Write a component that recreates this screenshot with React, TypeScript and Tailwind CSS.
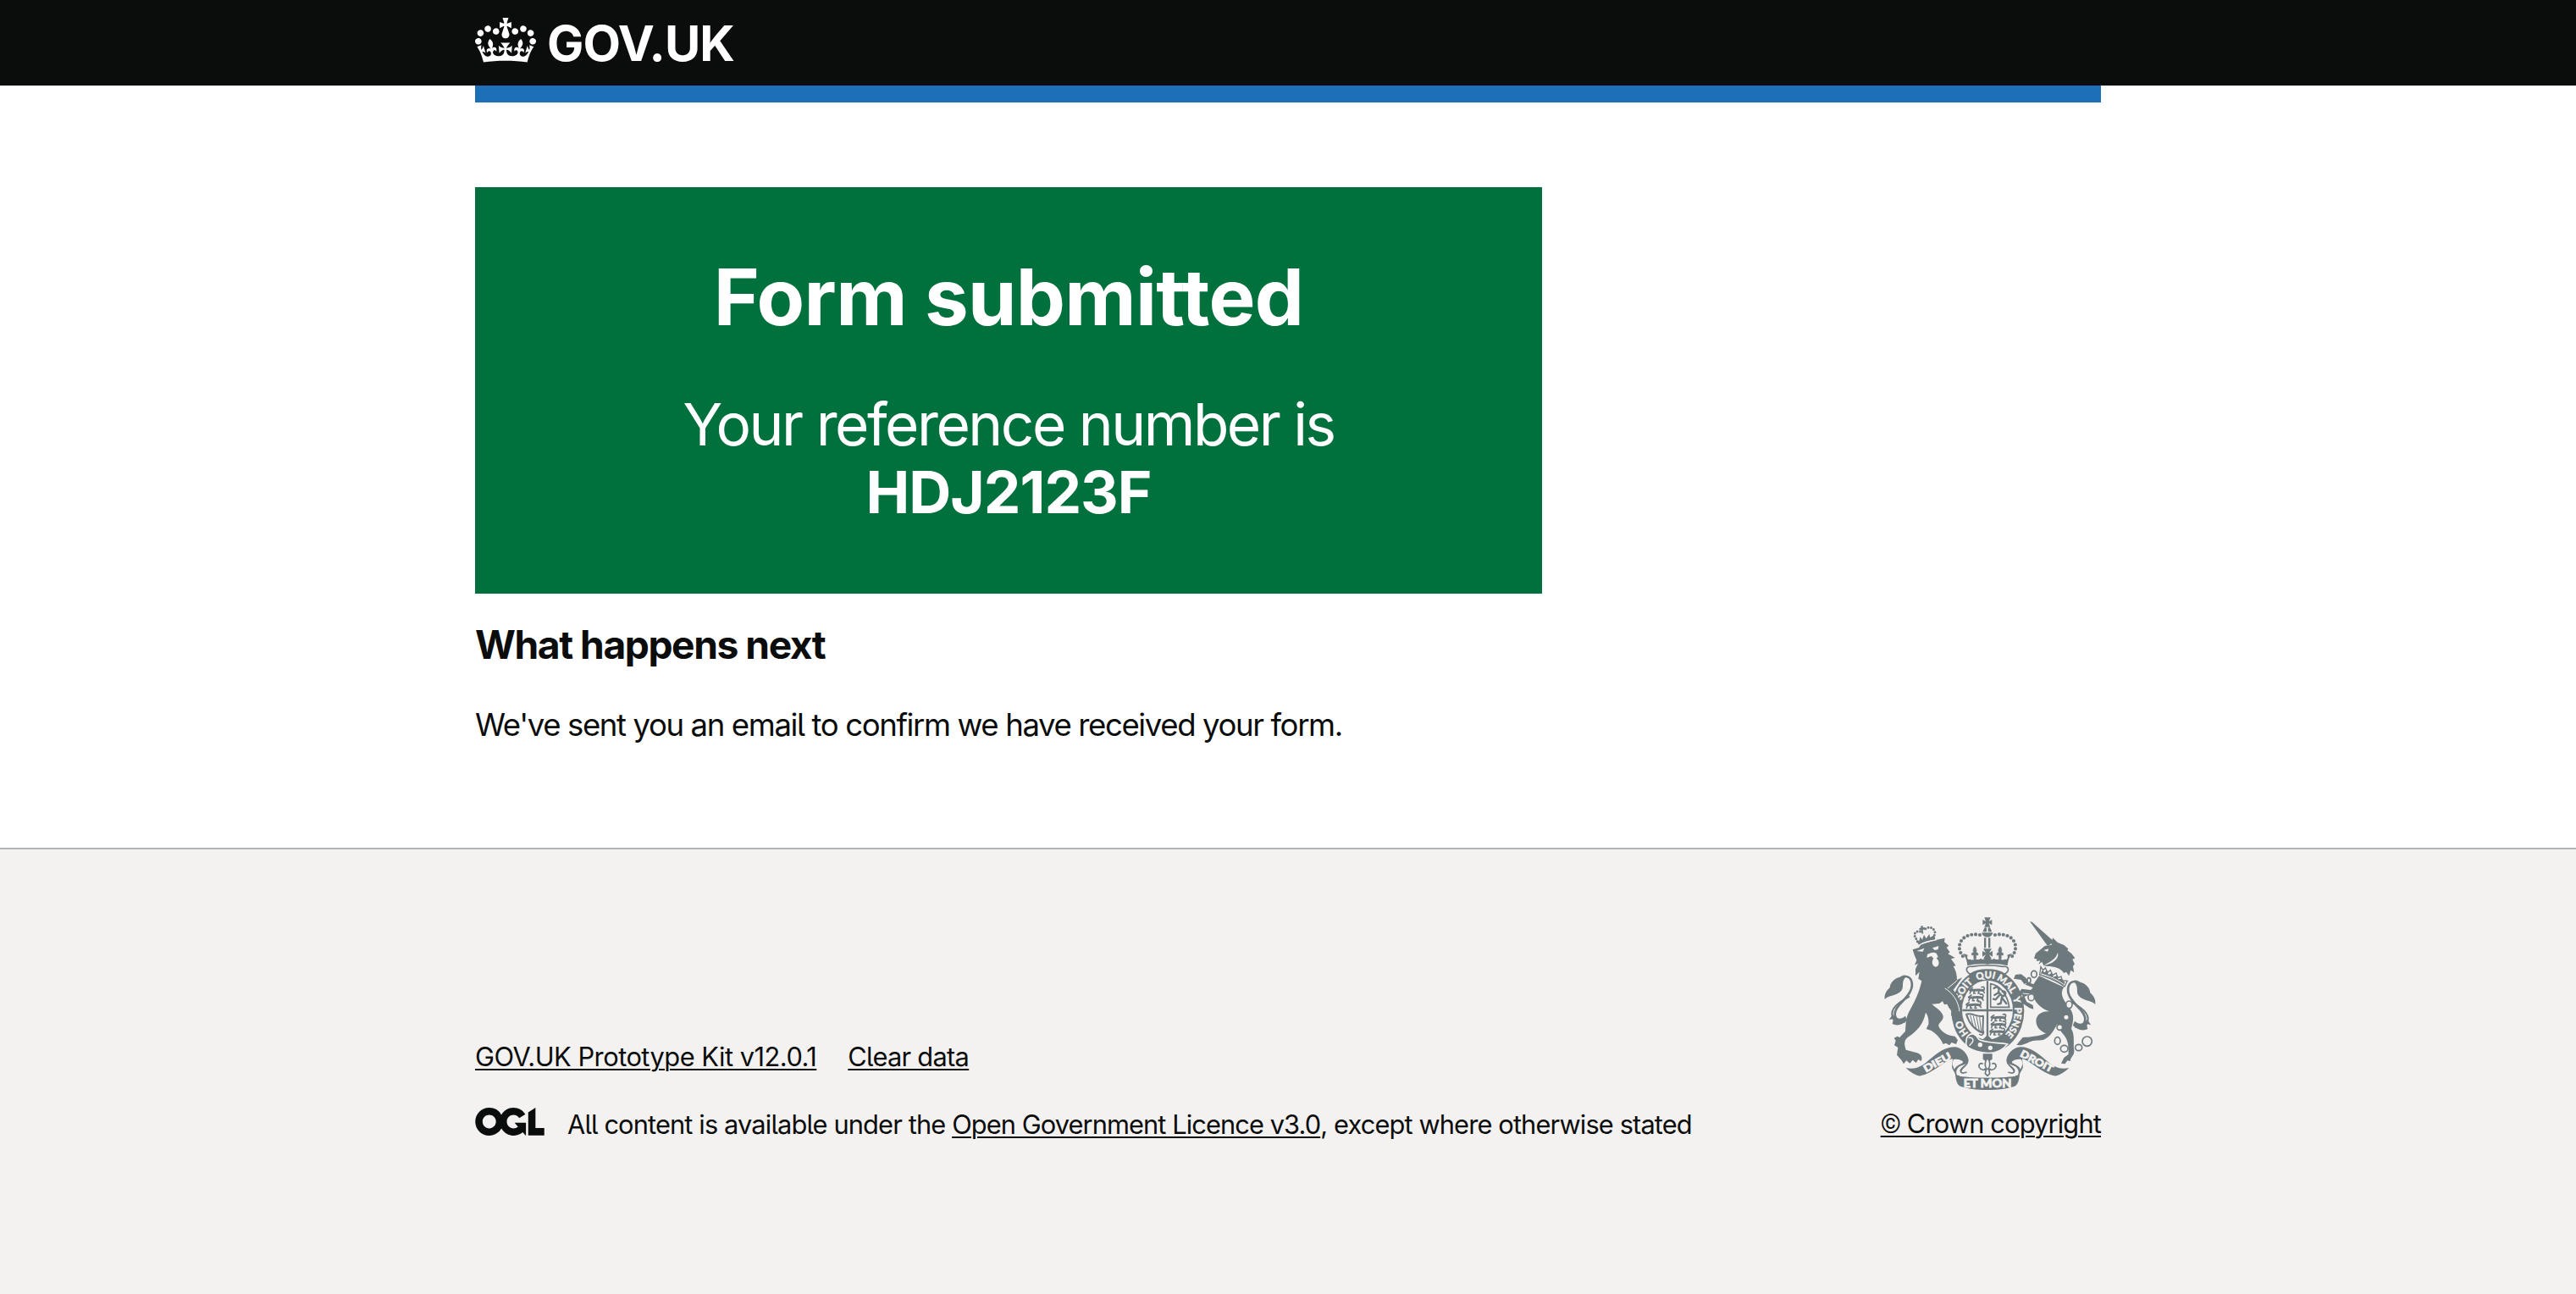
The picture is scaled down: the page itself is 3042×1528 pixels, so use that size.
const INK = '#6e797d';
const PAPER = '#f3f2f1';

function CrownLogo() {
  return (
    <svg viewBox="0 0 132 97" className="h-[53px] w-[72px] shrink-0" fill="currentColor" aria-hidden="true">
      <path
        fillRule="evenodd"
        d="M25 30.2c3.5 1.5 7.7-.2 9.1-3.7 1.5-3.6-.2-7.8-3.9-9.2-3.6-1.4-7.6.3-9.1 3.9-1.4 3.5.3 7.5 3.9 9zM9 39.5c3.6 1.5 7.8-.2 9.2-3.7 1.5-3.6-.2-7.8-3.9-9.1-3.6-1.5-7.6.2-9.1 3.8-1.4 3.5.3 7.5 3.8 9zM4.4 57.2c3.5 1.5 7.7-.2 9.1-3.8 1.5-3.6-.2-7.7-3.9-9.1-3.5-1.5-7.6.3-9.1 3.8-1.4 3.5.3 7.6 3.9 9.1zm38.3-21.4c3.5 1.5 7.7-.2 9.1-3.8 1.5-3.6-.2-7.7-3.9-9.1-3.6-1.5-7.6.3-9.1 3.8-1.3 3.6.4 7.7 3.9 9.1zm64.4-5.6c-3.6 1.5-7.8-.2-9.1-3.7-1.5-3.6.2-7.8 3.8-9.2 3.6-1.4 7.7.3 9.2 3.9 1.3 3.5-.4 7.5-3.9 9zm15.9 9.3c-3.6 1.5-7.7-.2-9.1-3.7-1.5-3.6.2-7.8 3.7-9.1 3.6-1.5 7.7.2 9.2 3.8 1.5 3.5-.3 7.5-3.8 9zm4.7 17.7c-3.6 1.5-7.8-.2-9.2-3.8-1.5-3.6.2-7.7 3.9-9.1 3.6-1.5 7.7.3 9.2 3.8 1.3 3.5-.4 7.6-3.9 9.1zM89.3 35.8c-3.6 1.5-7.8-.2-9.2-3.8-1.4-3.6.2-7.7 3.9-9.1 3.6-1.5 7.7.3 9.2 3.8 1.4 3.6-.3 7.7-3.9 9.1zM69.7 17.7l8.9 4.7V9.3l-8.9 2.8c-.2-.3-.5-.6-.9-.9L72.4 0H59.6l3.5 11.2c-.3.3-.6.5-.9.9l-8.8-2.8v13.1l8.8-4.7c.3.3.6.7.9.9l-5 15.4v.1c-.2.8-.4 1.6-.4 2.4 0 4.1 3.1 7.5 7 8.1h.2c.3 0 .7.1 1 .1.4 0 .7 0 1-.1h.2c4-.6 7.1-4.1 7.1-8.1 0-.8-.1-1.7-.4-2.4V34l-5.1-15.4c.4-.2.7-.6 1-.9zM66 92.8c16.9 0 32.8 1.1 47.1 3.2 4-16.9 8.9-26.7 14-33.5l-9.6-3.4c1 4.9 1.1 7.2 0 10.2-1.5-1.4-3-4.3-4.2-8.7L108.6 76c2.8-2 5-3.2 7.5-3.3-4.4 9.4-10 11.9-13.6 11.2-4.3-.8-6.3-4.6-5.6-7.9 1-4.7 5.7-5.9 8-.5 4.3-8.7-3-11.4-7.6-8.8 7.1-7.2 7.9-13.5 2.1-21.1-8 6.1-8.1 12.3-4.5 20.8-4.7-5.4-12.1-2.5-9.5 6.2 3.4-5.2 7.9-2 7.2 3.1-.6 4.3-6.4 7.8-13.5 7.2-10.3-.9-10.9-8-11.2-13.8 2.5-.5 7.1 1.8 11 7.3L80.2 60c-4.1 4.4-8 5.3-12.3 5.4 1.4-4.4 8-11.6 8-11.6H55.5s6.4 7.2 7.9 11.6c-4.2-.1-8-1-12.3-5.4l1.4 16.4c3.9-5.5 8.5-7.7 10.9-7.3-.3 5.8-.9 12.8-11.1 13.8-7.2.6-12.9-2.9-13.5-7.2-.7-5 3.8-8.3 7.1-3.1 2.7-8.7-4.6-11.6-9.4-6.2 3.7-8.5 3.6-14.7-4.6-20.8-5.8 7.6-5 13.9 2.2 21.1-4.7-2.6-11.9.1-7.7 8.8 2.3-5.5 7.1-4.2 8.1.5.7 3.3-1.3 7.1-5.7 7.9-3.5.7-9-1.8-13.5-11.2 2.5.1 4.7 1.3 7.5 3.3l-4.7-15.4c-1.2 4.4-2.7 7.2-4.3 8.7-1.1-3-.9-5.3 0-10.2l-9.5 3.4c5 6.9 9.9 16.7 14 33.5 14.8-2.1 30.8-3.2 47.7-3.2z"
      />
    </svg>
  );
}

function LicenceLogo() {
  return (
    <svg viewBox="0 0 483.2 195.7" className="h-[33px] w-[82px] shrink-0" fill="currentColor" aria-hidden="true">
      <path d="M421.5 142.8V.1l-50.7 32.3v161.1h112.4v-50.7zm-122.3-9.6A47.12 47.12 0 0 1 221 97.8c0-26 21.1-47.1 47.1-47.1 16.7 0 31.4 8.7 39.7 21.8l42.7-27.2A97.63 97.63 0 0 0 268.1 0c-36.5 0-68.3 20.1-85.1 49.7A98 98 0 0 0 97.8 0C43.9 0 0 43.9 0 97.8s43.9 97.8 97.8 97.8c36.5 0 68.3-20.1 85.1-49.7a97.76 97.76 0 0 0 149.6 25.4l19.4 22.2h3v-87.8h-80l24.3 27.5zM97.8 145c-26 0-47.1-21.1-47.1-47.1s21.1-47.1 47.1-47.1 47.1 21.1 47.1 47.1S123.8 145 97.8 145" />
    </svg>
  );
}

/* One arch of pearls, a fleur-de-lis and the rising rim of the central crown. */
function CrownSide() {
  return (
    <g>
      <path d="M414 101C380 94 347 108 342 138C340 155 346 168 358 182" fill="none" stroke={INK} strokeWidth="12.5" strokeLinecap="round" strokeDasharray="0 14.6" />
      <path d="M396 142C389 150 389 158 394 164C388 162 383 166 386 173L393 172L392 184H401L400 172L407 173C410 166 404 162 399 164C404 158 403 150 396 142Z" fill={INK} stroke={INK} strokeWidth="2" />
      <path d="M355 166L371 172C366 184 374 191 380 187C387 192 394 189 396 182C400 190 412 190 418 184C424 192 434 187 432 178L442 178V205C415 202 390 204 370 210C369 193 364 180 355 166Z" fill={INK} />
    </g>
  );
}

/* A passant lion of the English quarters. */
function SmallLion({ x, y }: { x: number; y: number }) {
  return (
    <g transform={`translate(${x} ${y})`} fill="none" stroke={INK} strokeLinecap="round" strokeLinejoin="round">
      <path d="M2 8C12 12 30 4 48 10" strokeWidth="9" />
      <path d="M5 9L1 20M17 10L14 20L20 20M34 9L30 20L36 20M47 10L52 18" strokeWidth="5" />
      <path d="M48 10C56 2 50 -6 42 -2M4 4L10 0" strokeWidth="5" />
    </g>
  );
}

/* The scroll end and its fold below the shield. */
function ScrollSide() {
  return (
    <g>
      <path d="M152 572C180 578 200 572 225 552C260 522 290 497 325 498C352 500 372 524 374 546C374 560 352 570 348 588L340 604L328 600C326 584 312 576 316 562L318 540C290 545 250 590 205 600C190 602 165 585 152 572Z" fill={INK} />
      <path d="M321 543C330 540 342 542 352 548C358 552 352 556 344 559C334 563 326 570 324 577C318 566 314 556 321 543Z" fill={PAPER} />
      <path d="M366 556C366 562 346 568 344 582C345 590 350 594 356 600L334 598C328 590 330 574 344 566C352 562 360 560 366 556Z" fill={PAPER} />
      <path d="M370 550C371 564 350 570 346 580C346 592 354 592 366 588" fill="none" stroke={INK} strokeWidth="5" strokeLinecap="round" />
    </g>
  );
}

function TailSide() {
  return (
    <g>
      <path d="M154 402C112 412 102 382 126 352C150 325 184 296 171 262C163 243 139 244 128 260" fill="none" stroke={INK} strokeWidth="8" />
      <path d="M165 318C140 335 95 355 104 390C108 408 128 415 150 408" fill="none" stroke={INK} strokeWidth="6" />
      <path d="M151 250C120 245 96 266 95 288C84 298 75 310 77 329C88 315 122 316 136 298C147 284 134 268 151 250Z" fill={INK} />
      <path d="M106 382L92 402L108 398L104 416C118 424 140 422 156 402L150 388C135 402 118 400 106 382Z" fill={INK} />
    </g>
  );
}

function RoyalArms() {
  return (
    <svg viewBox="75 38 750 612" className="h-[204px] w-[250px]" aria-hidden="true">
      <defs>
        <path id="garter" d="M441 480A97 113 0 0 1 441 254A97 113 0 0 1 441 480" />
      </defs>

      {/* tails */}
      <TailSide />
      <g transform="translate(900 18) scale(-1 1)">
        <TailSide />
      </g>

      {/* garter */}
      <ellipse cx="442" cy="370" rx="129" ry="149" fill={INK} />
      <ellipse cx="441" cy="367" rx="90" ry="105" fill={PAPER} />
      <g fill={PAPER} stroke={PAPER} strokeWidth="1.5" fontFamily="Lato, sans-serif" fontWeight="700" fontSize="34" textAnchor="middle">
        <text><textPath href="#garter" startOffset="15.5%">HO</textPath></text>
        <text><textPath href="#garter" startOffset="36%">SOIT</textPath></text>
        <text><textPath href="#garter" startOffset="49%">QUI</textPath></text>
        <text><textPath href="#garter" startOffset="60.5%">MAL</textPath></text>
        <text><textPath href="#garter" startOffset="70%">Y</textPath></text>
        <text><textPath href="#garter" startOffset="81.5%">PENSE</textPath></text>
      </g>

      {/* quarters */}
      <path d="M441 264V470M352 368H530" stroke={INK} strokeWidth="7" />
      <SmallLion x={378} y={288} />
      <SmallLion x={374} y={314} />
      <SmallLion x={366} y={340} />
      <SmallLion x={454} y={385} />
      <SmallLion x={454} y={410} />
      <SmallLion x={450} y={435} />
      <path d="M452 357V274C485 280 512 312 518 357Z" fill="none" stroke={INK} strokeWidth="5" />
      <path d="M464 290L474 284L482 292L480 304L494 318L504 314M480 306L466 314M484 314L470 330L462 328M492 322L488 344L478 346M494 326L508 344M498 318C512 308 500 296 494 302" fill="none" stroke={INK} strokeWidth="7" strokeLinejoin="round" strokeLinecap="round" />
      <path d="M366 382C390 376 402 394 426 388L424 448C402 440 378 420 366 382Z" fill="none" stroke={INK} strokeWidth="6" strokeLinejoin="round" />
      <path d="M380 386L392 428M391 388L402 436M402 390L412 442M413 392L419 446" stroke={INK} strokeWidth="3" />
      <path d="M412 452C420 462 432 450 425 440" fill="none" stroke={INK} strokeWidth="5" />
      <path d="M426 470L441 456L456 470L470 476L415 474Z" fill={INK} />

      {/* buckle and strap */}
      <path d="M366 478C366 456 384 446 398 456C408 462 406 472 416 474C450 486 482 482 512 488C496 508 470 521 440 520C410 518 386 508 372 500C364 494 364 486 366 478Z" fill={INK} stroke={PAPER} strokeWidth="5" />
      <path d="M374 466C384 462 394 470 388 480C384 488 378 488 378 494" fill="none" stroke={PAPER} strokeWidth="4" />
      <circle cx="415" cy="490" r="8" fill={PAPER} />
      <circle cx="451" cy="501" r="8" fill={PAPER} />

      {/* pendant fleur-de-lis */}
      <path d="M425 522H458V541L448 548L441 538L434 548L425 541Z" fill={INK} />
      <path d="M441 536C430 552 430 562 437 574C430 582 418 580 412 570C408 560 416 552 425 558M441 536C452 552 452 562 445 574C452 582 464 580 470 570C474 560 466 552 457 558M430 576H452M436 578L433 592L441 600L449 592L446 578" fill="none" stroke={INK} strokeWidth="5" strokeLinejoin="round" />

      {/* central crown */}
      <CrownSide />
      <g transform="translate(882 0) scale(-1 1)">
        <CrownSide />
      </g>
      <path d="M430 39H452L446 53L457 47V66L446 60L451 73H430L435 60L424 66V47L435 53Z" fill={INK} />
      <path d="M431 75H438V90H424ZM443 75H450L457 90H443ZM421 93H460C458 104 450 109 441 109C431 109 423 104 421 93Z" fill={INK} />
      <path d="M429 111H436V147H429ZM444 111H451V147H444Z" fill={INK} />
      <path d="M426 150H456L447 164L459 158V178L447 171L456 186H426L435 171L423 178V158L435 164Z" fill={INK} />
      <path d="M379 240C359 226 366 211 386 213C420 208 462 208 496 213C516 211 522 226 503 240C470 219 412 219 379 240Z" fill={PAPER} stroke={INK} strokeWidth="5" />

      {/* lion */}
      <path d="M176 153L198 146L206 134L262 118L290 112L288 126L304 139L296 146L308 162L301 168L326 182L312 186L329 210L320 212C330 228 333 245 333 260L352 252L340 268L320 296C340 318 352 352 350 396L338 386L330 398L322 384L312 388L313 370L304 358L298 346L288 348L282 336L270 344L244 346C262 362 286 376 284 394C280 408 266 414 268 424C276 444 300 458 326 460L336 474L330 488L314 482L306 492L294 484L284 488C276 470 262 452 242 440L224 434L232 418C234 398 228 382 222 376C214 416 192 442 158 464C142 478 148 494 152 508L180 516C202 520 214 530 206 548L196 542L188 554L176 544L166 556L154 546L144 558L136 544L120 526L124 500L111 492L116 476L110 466L122 460L130 464L150 442C152 410 152 390 168 364C184 336 200 302 208 264L196 256L200 232L186 246L186 222L195 202L183 208L190 190L182 172Z" fill={INK} />
      <path d="M290 290C318 306 338 336 342 372M334 262L300 290" fill="none" stroke={PAPER} strokeWidth="3" />
      <path d="M190 158L217 148L212 160ZM246 147L268 140L266 152L254 155ZM228 170C236 166 250 160 260 166L266 178L260 184C272 190 272 214 257 214C244 212 242 194 250 184L242 176L226 182Z" fill={PAPER} />

      {/* lion's crown */}
      <path d="M193 124L183 104C180 92 194 84 206 90" fill="none" stroke={INK} strokeWidth="9" strokeLinecap="round" strokeDasharray="0 10.5" />
      <path d="M251 112L255 92C250 72 230 70 218 82" fill="none" stroke={INK} strokeWidth="9" strokeLinecap="round" strokeDasharray="0 10.5" />
      <path d="M204 70L212 68L212 75L219 74L219 82L212 82L214 96L208 97L207 84L200 85L199 77L205 76Z" fill={INK} />
      <path d="M189 116L198 124L203 108L210 118L216 100L224 114L235 98L238 110L252 102L256 117C234 120 214 126 197 136Z" fill={INK} />
      <path d="M196 139C214 129 238 122 260 119" fill="none" stroke={PAPER} strokeWidth="3" />

      {/* unicorn */}
      <path d="M591 53L599 55L678 126L654 140Z" fill={INK} />
      <path d="M606 184L612 166L630 152L644 140L668 136L672 111L690 128L712 137L727 150L724 156L738 166L751 183L742 188L750 204L744 212L748 234L736 226L730 246L720 232L712 236C700 218 676 212 654 212L640 210L634 196L622 206L628 192L614 194L617 187Z" fill={INK} />
      <path d="M640 155L658 150L654 160ZM690 164C697 186 668 206 640 208C662 198 684 186 690 164Z" fill={PAPER} />
      <path d="M630 214L638 226L646 218L654 234L664 226L672 244L684 236L690 252L702 248L706 262L724 264L714 284C690 264 654 252 626 242Z" fill={PAPER} stroke={INK} strokeWidth="4" />
      <path d="M630 240L634 226L644 234L650 226L658 242L668 236L674 250L686 246L692 258L702 256L716 270L710 280C686 262 658 250 630 240Z" fill={INK} />
      <path d="M632 239C660 247 688 258 711 276" fill="none" stroke={PAPER} strokeWidth="3" />
      <path d="M624 246L712 286C696 306 708 330 730 356C752 386 744 408 738 434C752 456 744 486 748 510C750 528 736 532 734 548L724 546L716 558L702 556L712 536L728 524C728 496 728 476 712 456C700 440 690 430 688 416C676 440 664 462 640 472C618 476 600 472 582 484L560 492L544 491L554 478L566 464C590 464 622 460 648 450C624 440 610 422 614 398C620 378 640 370 660 372C640 366 612 346 606 324L590 312L572 320L580 338L602 350L604 364L590 360L570 346L558 336L566 316L552 306L562 292L594 296L602 288L572 276L560 260L534 256L540 242L560 240L576 252L588 270L604 276Z" fill={INK} />
      <path d="M560 290L578 272M606 312L566 308" stroke={PAPER} strokeWidth="3" />

      {/* chain */}
      <g fill={PAPER} stroke={INK} strokeWidth="5">
        <ellipse cx="606" cy="240" rx="10" ry="12" />
        <ellipse cx="588" cy="262" rx="6" ry="9" />
        <ellipse cx="596" cy="322" rx="11" ry="12" />
        <ellipse cx="730" cy="348" rx="11" ry="13" />
        <circle cx="720" cy="393" r="10" />
        <circle cx="697" cy="428" r="10" />
        <ellipse cx="689" cy="476" rx="10" ry="13" />
        <ellipse cx="713" cy="504" rx="13" ry="12" />
        <ellipse cx="764" cy="500" rx="12" ry="11" />
        <circle cx="794" cy="478" r="17" />
      </g>

      {/* motto scroll */}
      <ScrollSide />
      <g transform="translate(882 0) scale(-1 1)">
        <ScrollSide />
      </g>
      <path d="M327 598C370 610 512 610 555 598C552 616 550 628 540 636C500 655 382 655 342 636C332 628 330 616 327 598Z" fill={INK} />
      <g fill={PAPER} stroke={PAPER} strokeWidth="2.5" fontFamily="Lato, sans-serif" fontWeight="700" textAnchor="middle">
        <text x="441" y="641" fontSize="38" textLength="170" lengthAdjust="spacingAndGlyphs">ET MON</text>
        <text transform="translate(269 563) rotate(-29)" fontSize="35" textLength="106" lengthAdjust="spacingAndGlyphs">DIEU</text>
        <text transform="translate(610 559) rotate(28)" fontSize="35" textLength="126" lengthAdjust="spacingAndGlyphs">DROIT</text>
      </g>
    </svg>
  );
}

const link = 'underline decoration-2 underline-offset-[3px]';

export default function App() {
  return (
    <div className="flex min-h-[1528px] w-full flex-col bg-white font-['Inter','Liberation_Sans',sans-serif] text-[#0b0c0c] antialiased [font-feature-settings:'cv05','calt'_0,'ccmp'_0]">
      <header className="h-[101px] bg-[#0b0c0c] text-white">
        <div className="mx-auto flex w-[1920px] items-start gap-[13px] pt-[21px]">
          <CrownLogo />
          <span className="text-[57.8px] leading-[60px] font-bold tracking-[-0.9px]">GOV.UK</span>
        </div>
      </header>

      <div className="mx-auto w-[1920px]">
        <div className="h-5 bg-[#1d70b8]" />
        <main className="pt-[100px] pb-[120px]">
          <section className="w-[1260px] bg-[#00703c] pt-[79px] pb-20 text-center text-white">
            <h1 className="text-[92.4px] leading-[100px] font-bold tracking-[-0.7px]">Form submitted</h1>
            <div className="mt-[61px] text-[69.3px] leading-[80px] tracking-[-2.5px]">
              Your reference number is
              <br />
              <strong className="font-bold tracking-[-1px]">HDJ2123F</strong>
            </div>
          </section>
          <h2 className="mt-[30px] text-[46.2px] leading-[60px] font-bold tracking-[-1.45px]">What happens next</h2>
          <p className="mt-10 text-[36.6px] leading-[50px] tracking-[-1.4px]">
            We've sent you an email to confirm we have received your form.
          </p>
        </main>
      </div>

      <footer className="flex-1 border-t-2 border-[#b1b4b6] bg-[#f3f2f1] text-[30.8px] leading-10">
        <div className="mx-auto flex w-[1920px] items-end justify-between pt-20">
          <div>
            <div className="mb-10 flex gap-[37px]">
              <a href="#" className={`${link} tracking-[-0.5px]`}>GOV.UK Prototype Kit v12.0.1</a>
              <a href="#" className={`${link} tracking-[-0.71px]`}>Clear data</a>
            </div>
            <div className="flex items-start gap-[27px]">
              <LicenceLogo />
              <p className="tracking-[-0.87px] whitespace-nowrap">
                All content is available under the{' '}
                <a href="#" className={`${link} tracking-[-0.92px]`}>Open Government Licence v3.0</a>, except where otherwise stated
              </p>
            </div>
          </div>
          <div className="flex flex-col items-end">
            <div className="pr-[6px]">
              <RoyalArms />
            </div>
            <a href="#" className={`${link} mt-5 tracking-[-0.85px]`}>
              <span className="font-['Roboto',sans-serif]">©</span> Crown copyright
            </a>
          </div>
        </div>
      </footer>
    </div>
  );
}
